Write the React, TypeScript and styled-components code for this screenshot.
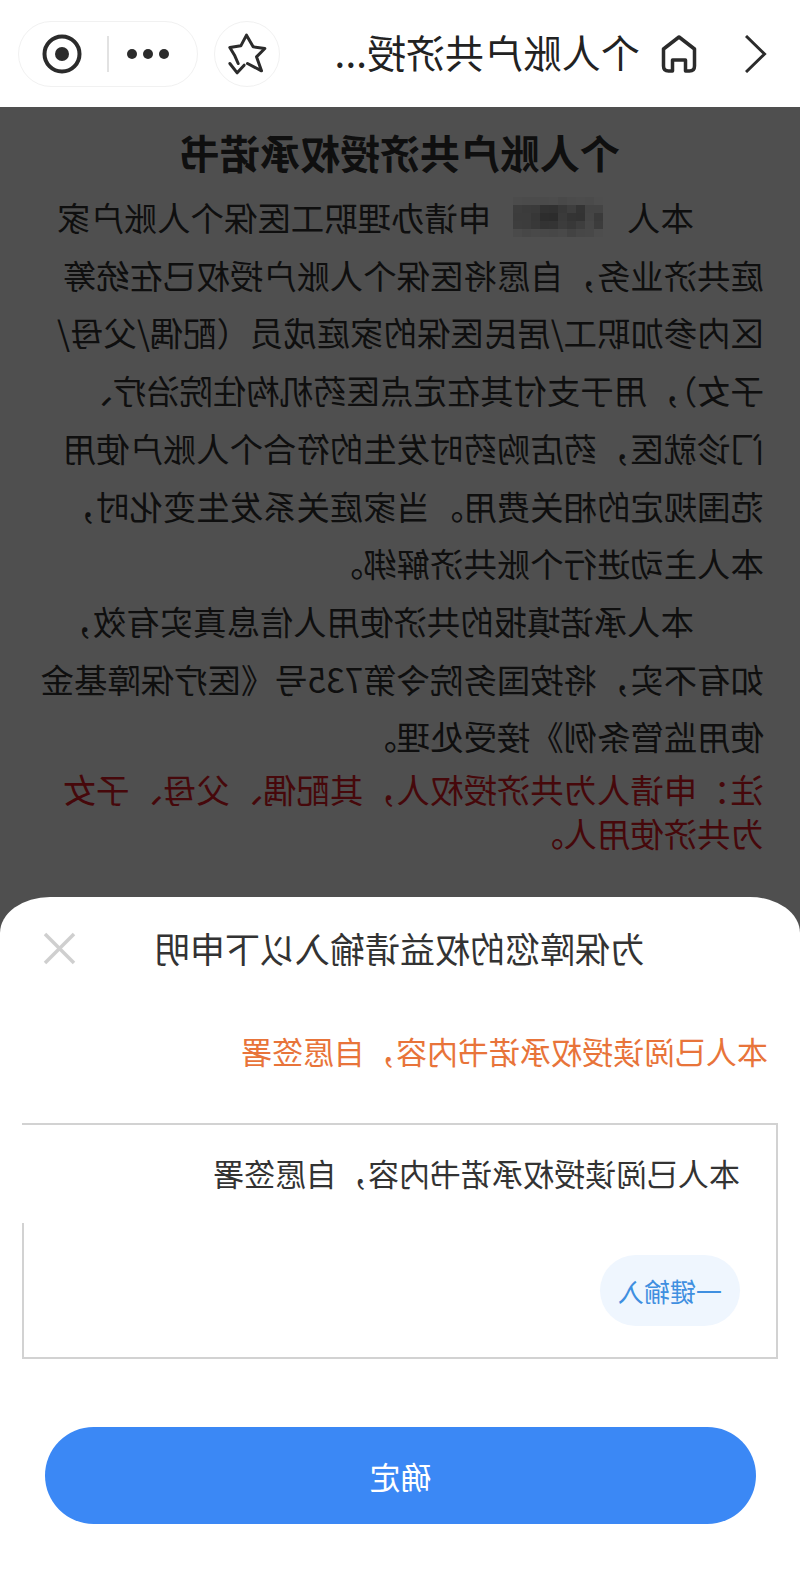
import styled, { createGlobalStyle } from 'styled-components'

const GlobalStyle = createGlobalStyle`
    html, body {
        margin: 0;
        padding: 0;
        background: #fff;
    }
    * {
        box-sizing: border-box;
    }
`

const FONT = `"Noto Sans CJK SC", "Noto Sans", sans-serif`

// the whole screen is flipped horizontally in the reference
const Screen = styled.div`
    position: relative;
    width: 800px;
    height: 1575px;
    overflow: hidden;
    background: #fff;
    font-family: ${FONT};
    transform: scaleX(-1);
`

const NavBar = styled.header`
    height: 107px;
    display: flex;
    align-items: center;
    padding: 0 18px 0 33px;
    background: #fff;
`

const NavIcon = styled.svg`
    display: block;
    flex: none;
    fill: none;
    stroke: #2b2b2b;
`

const NavTitle = styled.h2`
    margin: -5px 0 0 21px;
    flex: 1;
    font-size: 39px;
    line-height: 46px;
    font-weight: 400;
    color: #222;
    white-space: nowrap;
`

const StarButton = styled.div`
    width: 66px;
    height: 66px;
    margin-right: 16px;
    flex: none;
    display: flex;
    align-items: center;
    justify-content: center;
    border: 1px solid #f1f1f1;
    border-radius: 50%;
`

const Capsule = styled.div`
    width: 180px;
    height: 66px;
    flex: none;
    display: flex;
    align-items: center;
    border: 1px solid #f1f1f1;
    border-radius: 33px;
    padding: 0 0 0 28px;
`

const Dots = styled.div`
    display: flex;
    gap: 6px;
    flex: none;

    span {
        width: 10px;
        height: 10px;
        border-radius: 50%;
        background: #2b2b2b;
    }
`

const Divider = styled.div`
    width: 2px;
    height: 36px;
    margin: 0 25px 0 18px;
    flex: none;
    background: #e2e2e2;
`

const Document = styled.main`
    padding: 18px 36px 0;
    color: #333;
`

const DocTitle = styled.h1`
    margin: 0 0 9px;
    text-align: center;
    font-size: 40px;
    line-height: 54px;
    font-weight: 700;
    white-space: nowrap;
`

const Paragraph = styled.p<{ $indent?: boolean }>`
    margin: 0;
    font-size: 33.4px;
    line-height: 57.7px;
    text-indent: ${p => (p.$indent ? '70px' : '0')};
    white-space: nowrap;
`

const Notice = styled.p`
    margin: 2px 0 0;
    font-size: 33.4px;
    line-height: 44px;
    color: #e21a26;
    white-space: nowrap;
`

const Mosaic = styled.span`
    display: inline-grid;
    grid-template-columns: repeat(10, 9px);
    grid-auto-rows: 8px;
    width: 90px;
    height: 40px;
    margin: 9px 22px 0 24px;
    vertical-align: top;
    text-indent: 0;
`

const Mask = styled.div`
    position: absolute;
    inset: 107px 0 0 0;
    background: rgba(0, 0, 0, 0.69);
`

const Sheet = styled.section`
    position: absolute;
    left: 0;
    right: 0;
    bottom: 0;
    height: 678px;
    padding: 0 22px 51px;
    display: flex;
    flex-direction: column;
    background: #fff;
    border-radius: 50px 50px 0 0 / 36px 36px 0 0;
`

const SheetHeader = styled.div`
    position: relative;
    height: 102px;
    display: flex;
    align-items: center;
    justify-content: center;
`

const SheetTitle = styled.h3`
    margin: 0;
    font-size: 35px;
    line-height: 50px;
    font-weight: 400;
    color: #333;
`

const CloseIcon = styled.svg`
    position: absolute;
    right: 21px;
    top: 35px;
    fill: none;
    stroke: #cfcfcf;
`

const Statement = styled.div`
    height: 124px;
    padding: 32px 0 0 10px;
    font-size: 31px;
    line-height: 40px;
    color: #e8743a;
    white-space: nowrap;
`

const InputBox = styled.div`
    position: relative;
    height: 236px;
    padding: 28px 36px 31px;
    display: flex;
    flex-direction: column;
    justify-content: space-between;
    align-items: flex-start;
    border: solid #d2d2d2;
    border-width: 2px 0 2px 2px;

    &::after {
        content: '';
        position: absolute;
        right: 0;
        top: 98px;
        bottom: 0;
        width: 2px;
        background: #d2d2d2;
    }
`

const InputText = styled.div`
    font-size: 31px;
    line-height: 40px;
    color: #333;
    white-space: nowrap;
`

const QuickFill = styled.button`
    width: 140px;
    height: 71px;
    padding: 0;
    border: 0;
    border-radius: 36px;
    background: #eff6fe;
    color: #3f8fe0;
    font-family: ${FONT};
    font-size: 26px;
`

const Confirm = styled.button`
    height: 97px;
    margin: 68px 23px 0 22px;
    padding: 0;
    border: 0;
    border-radius: 49px;
    background: #3b88f5;
    color: #fff;
    font-family: ${FONT};
    font-size: 31px;
`

const mosaicCells = [
    '#fbfbfb', '#f2f2f2', '#f4f4f4', '#f0f0f0', '#ececec', '#f4f4f4', '#f3f3f3', '#f0f0f0', '#f2f2f2', '#f4f4f4',
    '#dcdcdc', '#dadada', '#a8a8a8', '#c8c8c8', '#b4b4b4', '#9e9e9e', '#a0a0a0', '#bababa', '#bebebe', '#c4c4c4',
    '#bcbcbc', '#dedede', '#a4a4a4', '#a8a8a8', '#bcbcbc', '#8e8e8e', '#909090', '#b0b0b0', '#c0c0c0', '#c0c0c0',
    '#c0c0c0', '#e4e4e4', '#c8c8c8', '#b4b4b4', '#c0c0c0', '#a8a8a8', '#a4a4a4', '#b4b4b4', '#c0c0c0', '#c4c4c4',
    '#f8f8f8', '#e8e8e8', '#e4e4e4', '#d8d8d8', '#ececec', '#e4e4e4', '#e8e8e8', '#ececec', '#e4e4e4', '#eeeeee',
]

function App() {
    return (
        <>
            <GlobalStyle />
            <Screen>
                <NavBar>
                    <NavIcon width="22" height="38" viewBox="0 0 22 38" strokeWidth="3">
                        <polyline points="21,1 2.5,19 21,37" />
                    </NavIcon>
                    <NavIcon width="36" height="38" viewBox="0 0 36 38" strokeWidth="3.5" style={{ marginLeft: 48 }}>
                        <path d="M18 2 L2.5 14 V31 Q2.5 36 7.5 36 H11.5 V25 H24.5 V36 H28.5 Q33.5 36 33.5 31 V14 Z" strokeLinejoin="round" />
                    </NavIcon>
                    <NavTitle>个人账户共济授...</NavTitle>
                    <StarButton>
                        <NavIcon width="50" height="47" viewBox="31.5 45 150 140" strokeWidth="9">
                            <g transform="translate(213,0) scale(-1,1)" strokeLinejoin="round" strokeLinecap="round">
                                <path d="M80 145 L70 122 L55 97 L88 92 L105 60 L125 95 L160 100 L135 125 L150 167 L108 145" />
                                <path d="M55 145 L77 173 L98 150" />
                            </g>
                        </NavIcon>
                    </StarButton>
                    <Capsule>
                        <Dots>
                            <span />
                            <span />
                            <span />
                        </Dots>
                        <Divider />
                        <NavIcon width="40" height="40" viewBox="0 0 40 40" strokeWidth="4">
                            <circle cx="20" cy="20" r="17.5" />
                            <circle cx="20" cy="20" r="7" fill="#2b2b2b" stroke="none" />
                        </NavIcon>
                    </Capsule>
                </NavBar>
                <Document>
                    <DocTitle>个人账户共济授权承诺书</DocTitle>
                    <Paragraph $indent>
                        本人
                        <Mosaic>
                            {mosaicCells.map((c, i) => (
                                <span key={i} style={{ background: c }} />
                            ))}
                        </Mosaic>
                        申请办理职工医保个人账户家
                    </Paragraph>
                    <Paragraph>
                        庭共济业务，自愿将医保个人账户授权已在统筹<br />
                        区内参加职工/居民医保的家庭成员（配偶/父母/<br />
                        子女），用于支付其在定点医药机构住院治疗、<br />
                        门诊就医，药店购药时发生的符合个人账户使用<br />
                        范围规定的相关费用。当家庭关系发生变化时，<br />
                        本人主动进行个账共济解绑。
                    </Paragraph>
                    <Paragraph $indent>本人承诺填报的共济使用人信息真实有效，</Paragraph>
                    <Paragraph>
                        如有不实，将按国务院令第735号《医疗保障基金<br />
                        使用监管条例》接受处理。
                    </Paragraph>
                    <Notice>
                        注：申请人为共济授权人，其配偶、父母、子女<br />
                        为共济使用人。
                    </Notice>
                </Document>
                <Mask />
                <Sheet>
                    <SheetHeader>
                        <SheetTitle>为保障您的权益请输入以下申明</SheetTitle>
                        <CloseIcon width="33" height="33" viewBox="0 0 33 33" strokeWidth="3.5">
                            <path d="M2 2 L31 31 M31 2 L2 31" />
                        </CloseIcon>
                    </SheetHeader>
                    <Statement>本人已阅读授权承诺书内容，自愿签署</Statement>
                    <InputBox>
                        <InputText>本人已阅读授权承诺书内容，自愿签署</InputText>
                        <QuickFill>一键输入</QuickFill>
                    </InputBox>
                    <Confirm>确定</Confirm>
                </Sheet>
            </Screen>
        </>
    )
}

export default App
